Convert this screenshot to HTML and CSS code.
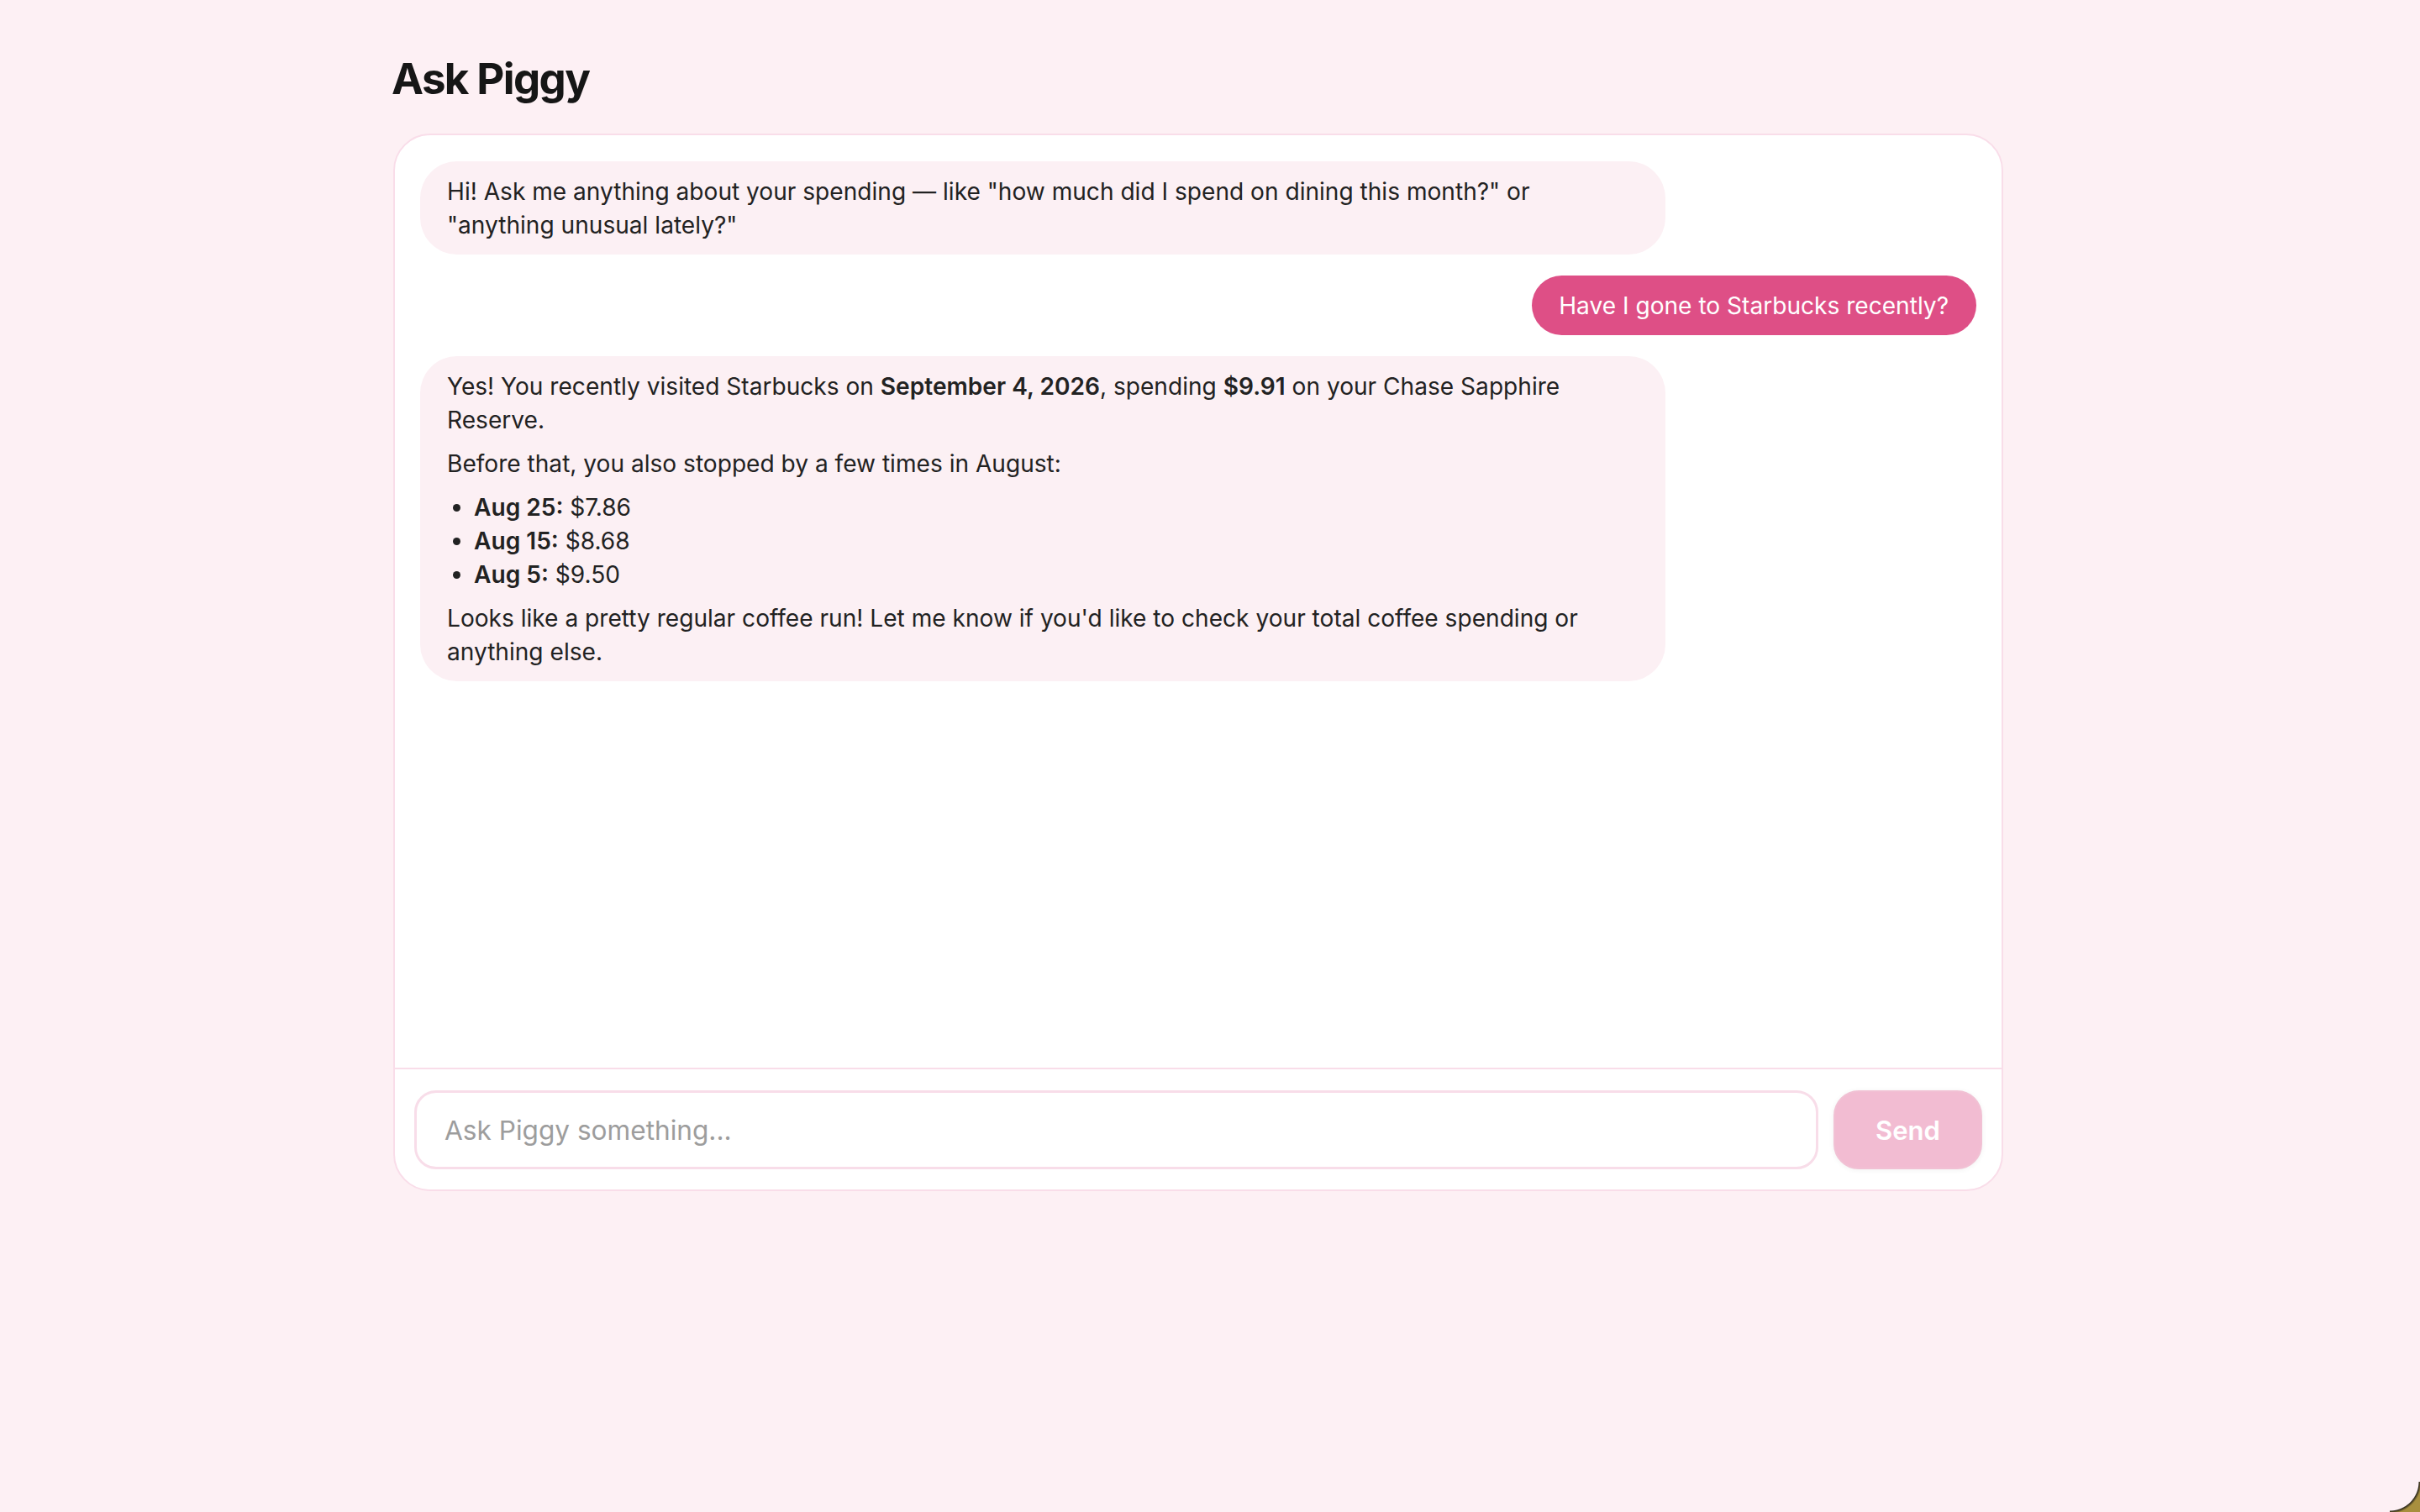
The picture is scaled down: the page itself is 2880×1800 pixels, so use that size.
FILE: index.html
```html
<!DOCTYPE html>
<html lang="en">
  <head>
    <meta charset="UTF-8" />
    <meta name="viewport" content="width=device-width, initial-scale=1.0" />
    <title>Ask Piggy</title>
    <link rel="stylesheet" href="styles.css">
  </head>
  <body>
    <main class="page">
      <h1 class="page-title">Ask Piggy</h1>

      <section class="chat">
        <div class="chat-messages">
          <div class="bubble bubble-bot">
            <p>Hi! Ask me anything about your spending — like "how much did I spend on dining this month?" or "anything unusual lately?"</p>
          </div>

          <div class="bubble bubble-user">
            <p>Have I gone to Starbucks recently?</p>
          </div>

          <div class="bubble bubble-bot">
            <p>Yes! You recently visited Starbucks on <strong>September 4, 2026</strong>, spending <strong>$9.91</strong> on your Chase Sapphire Reserve.</p>
            <p>Before that, you also stopped by a few times in August:</p>
            <ul>
              <li><strong>Aug 25:</strong> $7.86</li>
              <li><strong>Aug 15:</strong> $8.68</li>
              <li><strong>Aug 5:</strong> $9.50</li>
            </ul>
            <p>Looks like a pretty regular coffee run! Let me know if you'd like to check your total coffee spending or anything else.</p>
          </div>
        </div>

        <form class="chat-form" id="chat-form">
          <input type="text" class="chat-input" id="chat-input" placeholder="Ask Piggy something..." />
          <button type="submit" class="send-button" disabled>Send</button>
        </form>
      </section>
    </main>

    <div class="window-corner"></div>
  </body>
</html>
```

FILE: styles.css
```css
body {
  margin: 0;
  padding: 0 28px 0 0;
  background-color: #fdf0f4;
  font-family: Inter, "Noto Sans", "Liberation Sans", sans-serif;
  color: #1f1f1f;
}

.page {
  max-width: 1916px;
  margin: 0 auto;
  padding-top: 63px;
}

.page-title {
  margin: 0 0 34px -2px;
  font-size: 51px;
  line-height: 62px;
  font-weight: 700;
  letter-spacing: -1.6px;
  color: #161616;
}

.chat {
  display: flex;
  flex-direction: column;
  height: 1259px;
  box-sizing: border-box;
  background-color: #fff;
  border: 2px solid #f9dde9;
  border-radius: 44px;
  overflow: hidden;
}

.chat-messages {
  flex: 1;
  display: flex;
  flex-direction: column;
  align-items: flex-start;
  gap: 25px;
  padding: 31px 30px;
  overflow-y: auto;
}

.bubble {
  max-width: 80%;
  box-sizing: border-box;
  padding: 15.5px 33px 15.5px 32px;
  border-radius: 44px;
  font-size: 28.1px;
  line-height: 40px;
}

.bubble p,
.bubble ul {
  margin: 0 0 12px;
}

.bubble p:last-child {
  margin-bottom: 0;
}

.bubble ul {
  padding-left: 32px;
}

.bubble strong {
  font-weight: 600;
}

.bubble-bot {
  width: 80%;
  background-color: #fcf0f4;
  color: #222;
}

.bubble-user {
  align-self: flex-end;
  background-color: #de4f86;
  color: #fff;
}

.chat-form {
  display: flex;
  gap: 18px;
  padding: 25px 23px 24px;
  border-top: 2px solid #f9dde9;
}

.chat-input {
  flex: 1;
  height: 94px;
  box-sizing: border-box;
  padding: 0 33px;
  border: 3px solid #f8dde9;
  border-radius: 26px;
  font-family: inherit;
  font-size: 31.6px;
  color: #222;
  outline: none;
}

.chat-input::placeholder {
  color: #9d9d9d;
}

.send-button {
  width: 177px;
  height: 94px;
  border: 2px solid #f1c1d4;
  border-radius: 30px;
  background-color: #f2bcd2;
  color: #fff;
  font-family: inherit;
  font-size: 31px;
  font-weight: 600;
  box-shadow: 0 1px 6px rgba(0, 0, 0, 0.06);
}

/* rounded bottom-right window corner */
.window-corner {
  position: fixed;
  right: 0;
  bottom: 0;
  width: 36px;
  height: 36px;
  background: radial-gradient(circle at 0 0, transparent 34px, #2f2a1c 35px, #a88f3e 38px);
}
```
